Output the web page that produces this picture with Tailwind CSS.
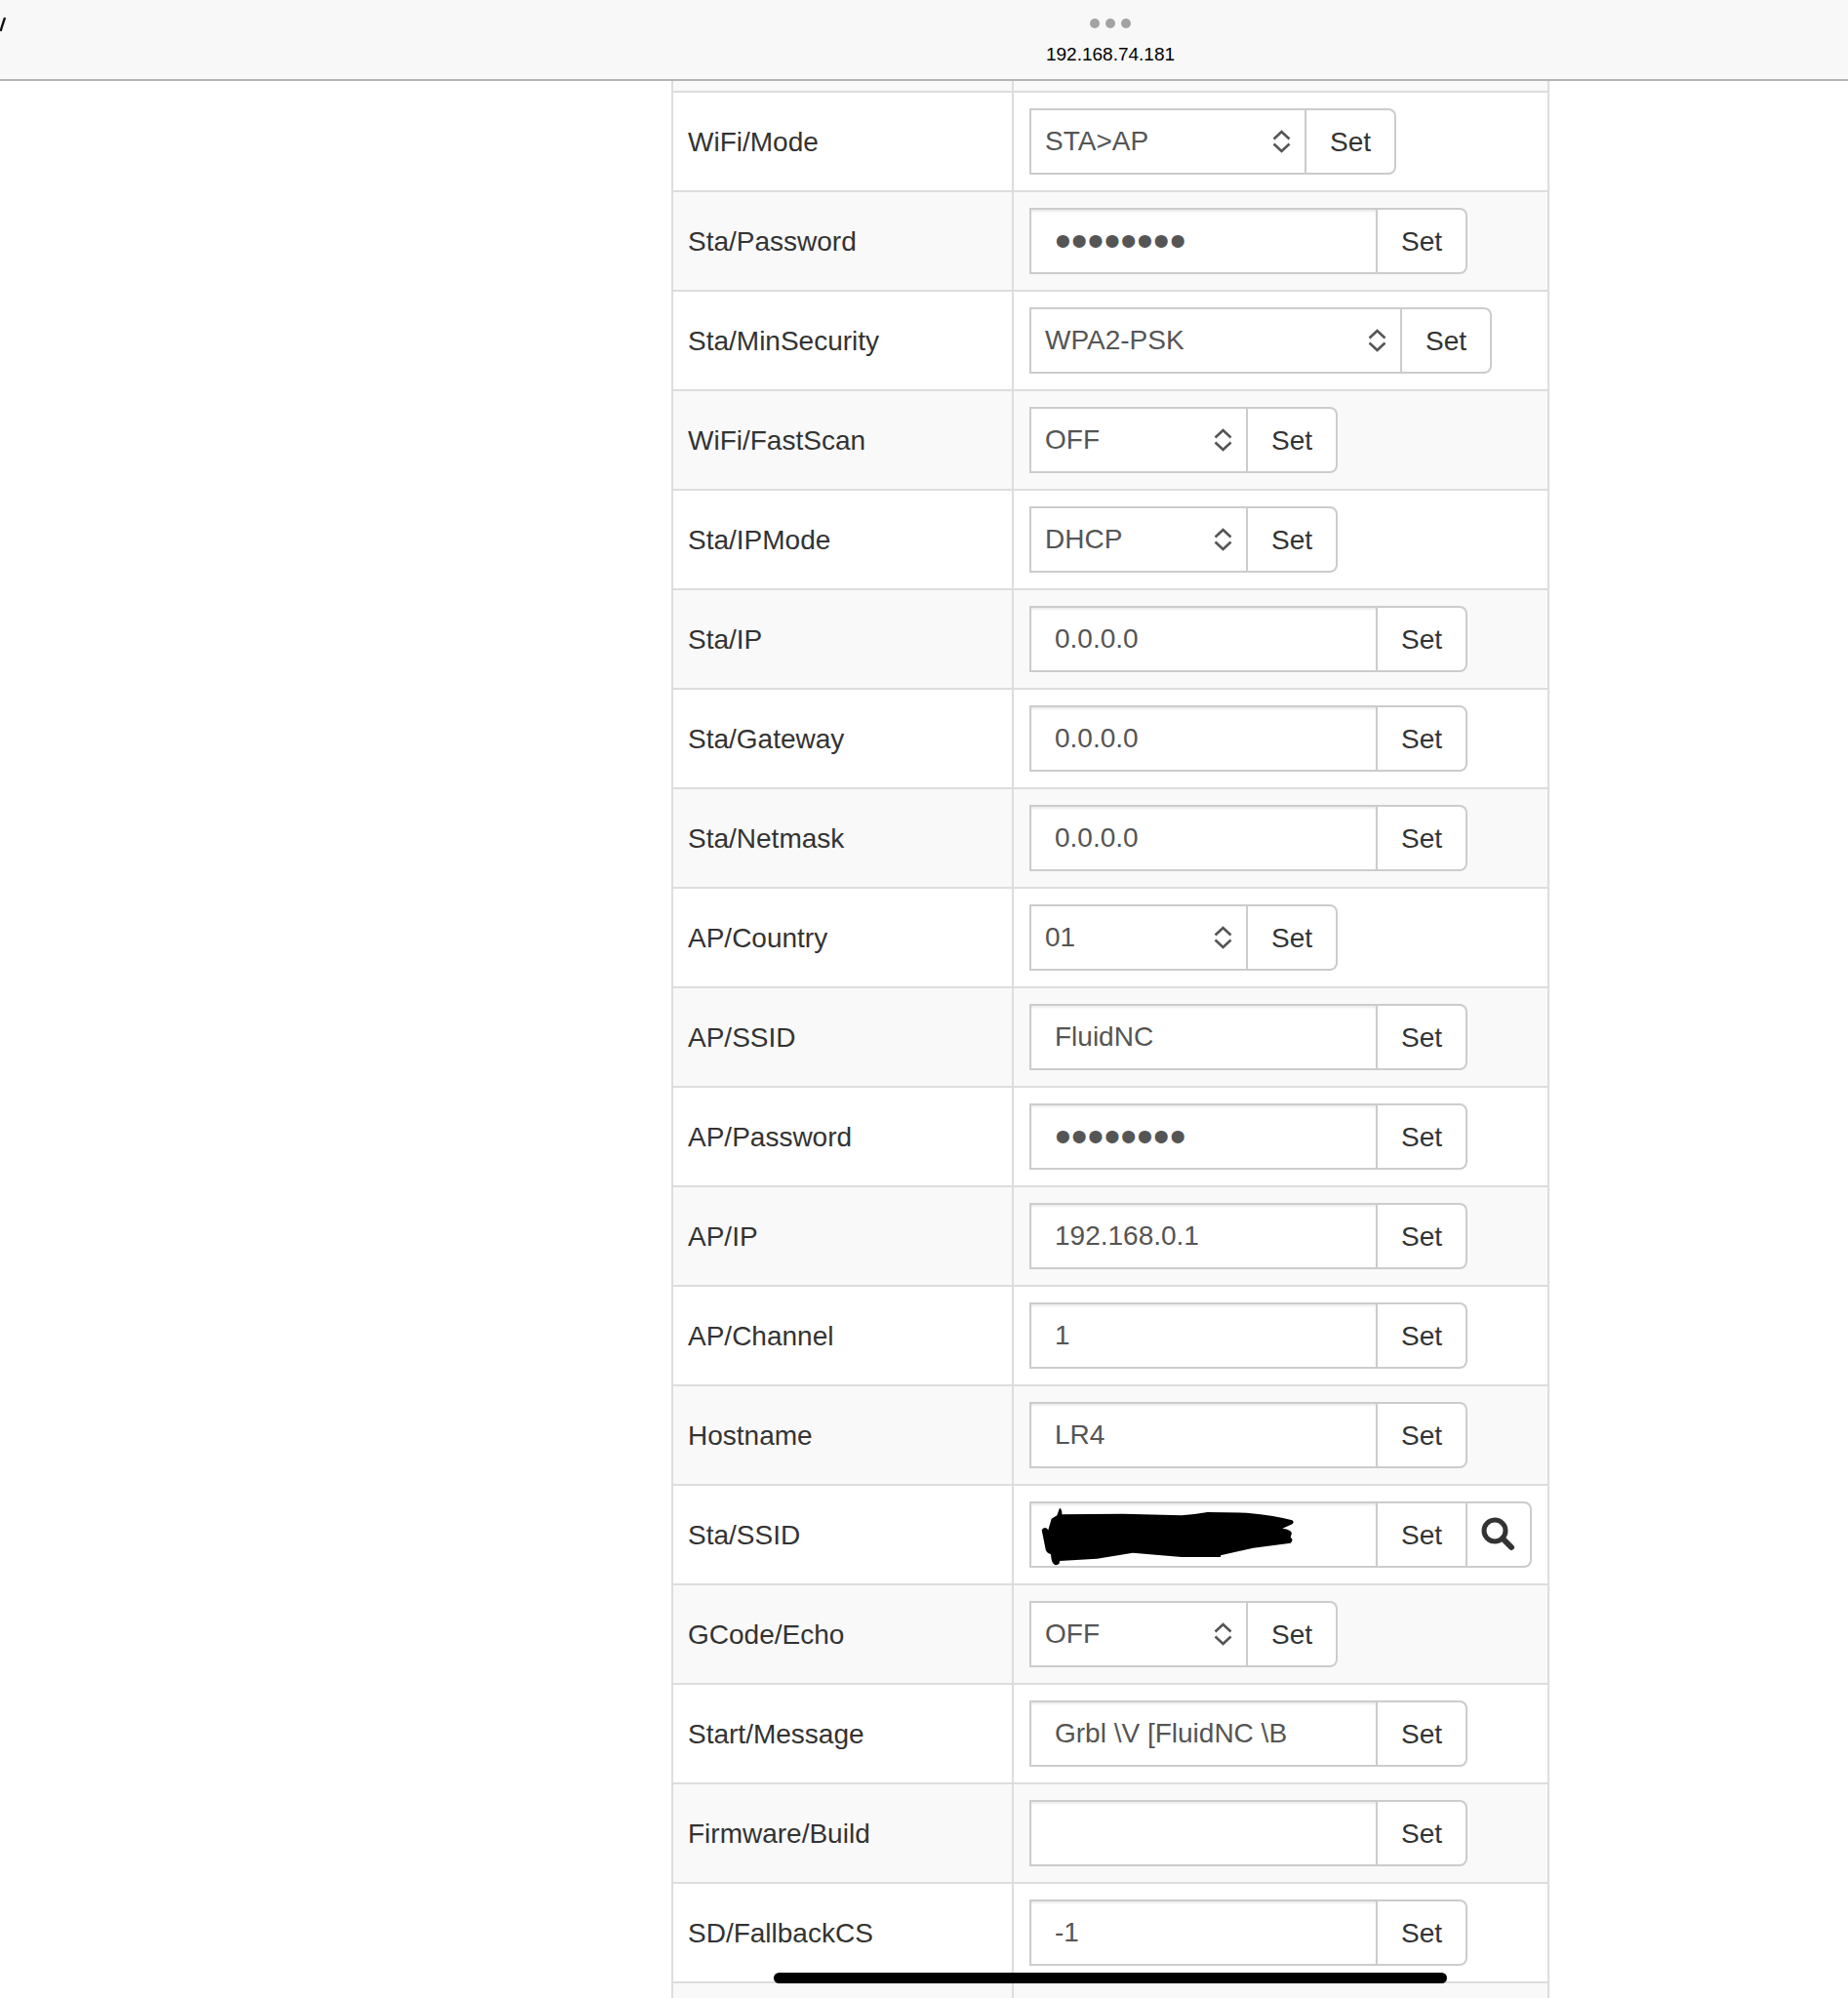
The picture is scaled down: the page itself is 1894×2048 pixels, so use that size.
<!DOCTYPE html>
<html lang="en">

<head>
    <meta charset="UTF-8" />
    <meta name="viewport" content="width=device-width, initial-scale=1.0" />
    <title>192.168.74.181</title>
    <script src="https://cdn.jsdelivr.net/npm/@tailwindcss/browser@4"></script>
</head>

<body class="relative h-[2048px] overflow-hidden bg-white font-['Liberation_Sans',sans-serif] text-[28px] text-[#333]">
    <!-- browser bar -->
    <header class="relative flex h-[83px] flex-col items-center border-b-2 border-[#b4b4b4] bg-[#f8f8f8] pl-[382px]">
        <svg class="absolute left-0 top-[18px]" width="8" height="16" viewBox="0 0 8 16">
            <path d="M5 0 L0.5 14" stroke="#111" stroke-width="2.4" fill="none" />
        </svg>
        <div class="mt-[19px] flex gap-[6px]">
            <span class="size-[10px] rounded-full bg-[#a3a3a3]"></span>
            <span class="size-[10px] rounded-full bg-[#a3a3a3]"></span>
            <span class="size-[10px] rounded-full bg-[#a3a3a3]"></span>
        </div>
        <div class="mt-[16px] text-[19px] leading-[22px] text-black">192.168.74.181</div>
    </header>

    <!-- settings table -->
    <main id="settings" class="ml-[688px] w-[900px] border-x-2 border-[#ddd]">
        <div class="grid h-[10px] grid-cols-[349px_1fr] bg-[#f9f9f9]">
            <div class="border-r-2 border-[#ddd]"></div>
            <div></div>
        </div>
    </main>

    <!-- home indicator -->
    <div class="absolute left-[793px] top-[2022px] h-[11px] w-[690px] rounded-full bg-black"></div>

    <script>
        const rows = [
            ["WiFi/Mode", "select", "STA>AP", "w-[284px]"],
            ["Sta/Password", "password"],
            ["Sta/MinSecurity", "select", "WPA2-PSK", "w-[382px]"],
            ["WiFi/FastScan", "select", "OFF", "w-[224px]"],
            ["Sta/IPMode", "select", "DHCP", "w-[224px]"],
            ["Sta/IP", "text", "0.0.0.0"],
            ["Sta/Gateway", "text", "0.0.0.0"],
            ["Sta/Netmask", "text", "0.0.0.0"],
            ["AP/Country", "select", "01", "w-[224px]"],
            ["AP/SSID", "text", "FluidNC"],
            ["AP/Password", "password"],
            ["AP/IP", "text", "192.168.0.1"],
            ["AP/Channel", "text", "1"],
            ["Hostname", "text", "LR4"],
            ["Sta/SSID", "scan"],
            ["GCode/Echo", "select", "OFF", "w-[224px]"],
            ["Start/Message", "text", "Grbl \\V [FluidNC \\B"],
            ["Firmware/Build", "text", ""],
            ["SD/FallbackCS", "text", "-1"],
        ];

        const inputBox = "relative flex h-full w-[357px] items-center border-2 border-[#ccc] bg-white pl-[24px] text-[#555] shadow-[inset_0_2px_2px_rgba(0,0,0,0.08)]";
        const chevrons = `<svg class="absolute right-[14px] top-1/2 -translate-y-1/2" width="19" height="24" viewBox="0 0 19 24" fill="none" stroke="#555" stroke-width="2.6"><path d="M1.5 9.5 L9.5 2 L17.5 9.5" /><path d="M1.5 14.5 L9.5 22 L17.5 14.5" /></svg>`;
        const scribble = `<svg class="absolute left-[-6px] top-[-6px]" width="290" height="80" viewBox="0 0 870 240"><path fill="#000" d="M105 32 Q113 36 112 52 L300 50 L480 55 Q520 52 560 45 L680 47 Q770 55 820 70 Q828 76 820 82 L790 95 Q822 100 818 112 L815 122 Q826 130 815 140 L700 155 L600 178 L600 183 L480 183 L330 170 L220 188 L105 195 Q106 208 92 208 Q80 206 78 175 Q64 170 62 160 L50 100 Q60 86 70 100 L80 65 L97 55 Z" /></svg>`;

        function control(row) {
            const [, type, value, width] = row;
            if (type === "select") {
                return `<div class="relative flex h-full items-center border-2 border-[#ccc] bg-white pl-[14px] text-[#555] ${width}">${value.replace(">", "&gt;")}${chevrons}</div>`;
            }
            if (type === "password") {
                return `<div class="${inputBox}"><span class="text-[48px] leading-none">••••••••</span></div>`;
            }
            if (type === "scan") {
                return `<div class="${inputBox}">${scribble}</div>`;
            }
            return `<div class="${inputBox}">${value}</div>`;
        }

        const main = document.getElementById("settings");
        rows.forEach((row, index) => {
            const stripe = index % 2 === 1 ? "bg-[#f9f9f9]" : "bg-white";
            const isScan = row[1] === "scan";
            const el = document.createElement("div");
            el.className = `grid h-[102px] grid-cols-[349px_1fr] border-t-2 border-[#ddd] ${stripe}`;
            el.innerHTML = `
                <div class="flex items-center border-r-2 border-[#ddd] pl-[15px] pt-[2px]">${row[0]}</div>
                <div class="py-[16px] pl-[16px]">
                    <div class="flex h-[68px]">
                        ${control(row)}
                        <div class="flex w-[92px] items-center justify-center border-y-2 border-r-2 border-[#ccc] bg-white pt-[1px] ${isScan ? "" : "rounded-r-[8px]"}">Set</div>
                        ${isScan ? `<div class="flex w-[66px] items-center justify-center rounded-r-[8px] border-y-2 border-r-2 border-[#ccc] bg-white"><svg width="36" height="36" viewBox="0 0 36 36" fill="none" stroke="#333"><circle cx="14" cy="14" r="11" stroke-width="5" /><path d="M22 22 L31 31" stroke-width="6" stroke-linecap="round" /></svg></div>` : ""}
                    </div>
                </div>`;
            main.appendChild(el);
        });

        const last = document.createElement("div");
        last.className = "grid h-[40px] grid-cols-[349px_1fr] border-t-2 border-[#ddd] bg-[#f9f9f9]";
        last.innerHTML = `<div class="border-r-2 border-[#ddd]"></div><div></div>`;
        main.appendChild(last);
    </script>
</body>

</html>
